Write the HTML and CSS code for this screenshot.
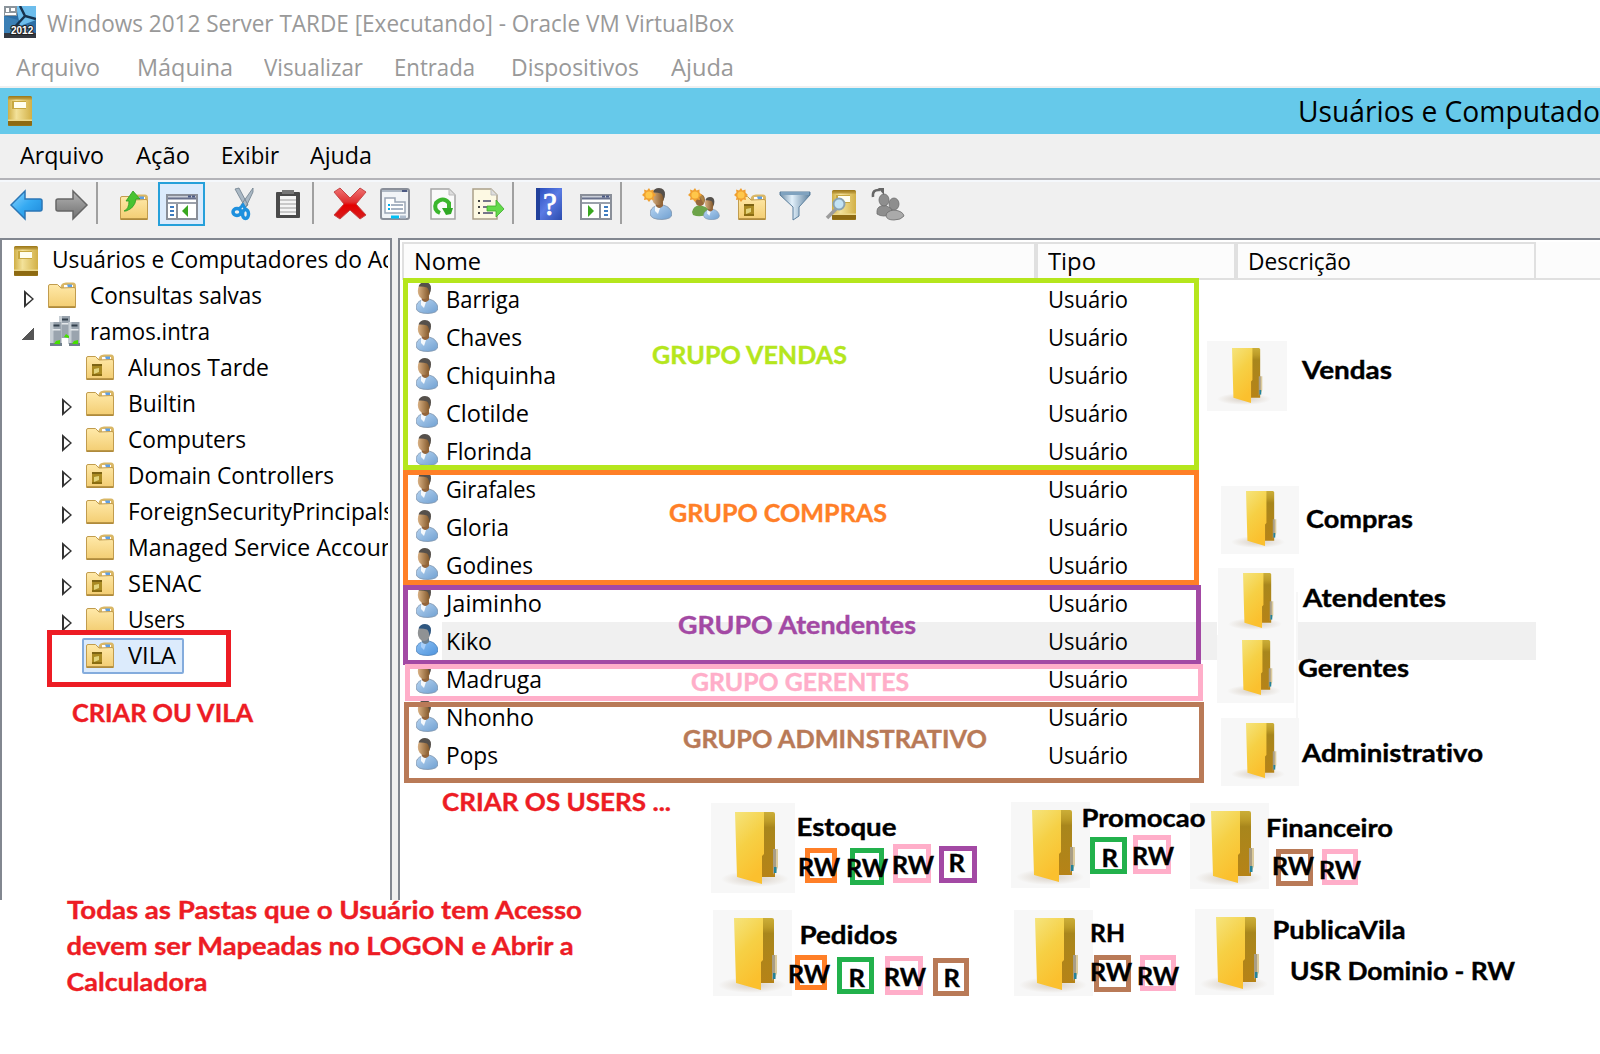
FILE: index.html
```html
<!DOCTYPE html>
<html lang="pt-BR">
<head>
<meta charset="utf-8">
<title>Windows 2012 Server TARDE [Executando] - Oracle VM VirtualBox</title>
<link rel="stylesheet" href="styles.css">
</head>
<body>
<svg class="defs" width="0" height="0">
  <defs>
    <linearGradient id="gFolder" x1="0" y1="0" x2="0" y2="1"><stop offset="0" stop-color="#ffe9a9"/><stop offset="1" stop-color="#f3cd72"/></linearGradient>
    <linearGradient id="gFront" x1="0" y1="0" x2=".4" y2="1"><stop offset="0" stop-color="#f5e47c"/><stop offset=".5" stop-color="#f6d045"/><stop offset="1" stop-color="#fbc02e"/></linearGradient>
    <linearGradient id="gBack" x1="0" y1="0" x2="0" y2="1"><stop offset="0" stop-color="#cbae38"/><stop offset=".14" stop-color="#bd9c28"/><stop offset=".24" stop-color="#a8861c"/><stop offset="1" stop-color="#b68317"/></linearGradient>
    <linearGradient id="gBook" x1="0" y1="0" x2="1" y2="0"><stop offset="0" stop-color="#cfae45"/><stop offset=".35" stop-color="#f3e29a"/><stop offset="1" stop-color="#d2b046"/></linearGradient>
    <linearGradient id="gBlue" x1="0" y1="0" x2="1" y2="1"><stop offset="0" stop-color="#8fd6ff"/><stop offset=".5" stop-color="#35aaf2"/><stop offset="1" stop-color="#1c86d8"/></linearGradient>
    <linearGradient id="gGray" x1="0" y1="0" x2="0" y2="1"><stop offset="0" stop-color="#b5b5b5"/><stop offset="1" stop-color="#707070"/></linearGradient>
    <linearGradient id="gRed" x1="0" y1="0" x2="0" y2="1"><stop offset="0" stop-color="#ef7373"/><stop offset=".45" stop-color="#e03030"/><stop offset=".55" stop-color="#e40000"/><stop offset="1" stop-color="#d62020"/></linearGradient>
    <linearGradient id="gSkin" x1="0" y1="0" x2="1" y2="0"><stop offset="0" stop-color="#d9b184"/><stop offset="1" stop-color="#7d5224"/></linearGradient>
    <linearGradient id="gShirt" x1="0" y1="0" x2="1" y2="1"><stop offset="0" stop-color="#b9d6f3"/><stop offset="1" stop-color="#6f9fd0"/></linearGradient>
    <linearGradient id="gSel" x1="0" y1="0" x2="1" y2="1"><stop offset="0" stop-color="#8fc2f5"/><stop offset="1" stop-color="#4d93dc"/></linearGradient>
    <linearGradient id="gFunnel" x1="0" y1="0" x2="1" y2="0"><stop offset="0" stop-color="#6d8ca6"/><stop offset=".4" stop-color="#e3f1fb"/><stop offset="1" stop-color="#5b7f9d"/></linearGradient>
    <linearGradient id="gHelp" x1="0" y1="0" x2="1" y2="1"><stop offset="0" stop-color="#2348b8"/><stop offset=".5" stop-color="#5a7be4"/><stop offset="1" stop-color="#2c4cae"/></linearGradient>
    <radialGradient id="gShadow"><stop offset="0" stop-color="#d8cfc4"/><stop offset="1" stop-color="#f7f7f7"/></radialGradient>

    <symbol id="vm" viewBox="0 0 32 32"><path d="M0 0h32v32H0z" fill="#2c6ea5"/><path d="M12 0h20v14L16 20z" fill="#6dbdec"/><path d="M0 10l14 4 6 18H0z" fill="#3b7fb5"/><path d="M16 0l5 10 11 3M21 10L8 24" stroke="#17324e" stroke-width="2.500" fill="none"/><path d="M0 0h13v10H0z" fill="#8b949b"/><path d="M2 2h3v4H2zM7 2h4v3H7zM1 7h11v2H1z" fill="#fff"/><path d="M0 27h32v5H0z" fill="#333942"/><text x="7" y="28" font-family="Liberation Sans" font-size="10" font-weight="bold" fill="#fff" stroke="#222" stroke-width="2" paint-order="stroke">2012</text></symbol>

    <symbol id="book" viewBox="0 0 24 30"><rect width="24" height="30" rx="1.5" fill="#a07c1d"/><path d="M0 2h24v22H0z" fill="url(#gBook)"/><path d="M0 1.5h24v2H0z" fill="#b8973a"/><path d="M0 25h24v4.500H0z" fill="#8d6a12"/><path d="M0 23.500h24v1.500H0z" fill="#ecd88b"/><rect x="4" y="5" width="14" height="8" fill="#c7a840"/><rect x="6" y="6" width="12" height="6" fill="#fffff0"/></symbol>

    <symbol id="folder" viewBox="0 0 28 26"><path d="M12 7c1-6 3-6 6-6.500h7c2 0 3 1.500 3 3.500v6H12z" fill="#d9b766"/><path d="M16 3h9v3h-9z" fill="#fff"/><path d="M19 2.500h5v3h-4z" fill="#5f9fe4"/><path d="M.5 4q0-1.500 1.500-1.500h7.500L13 6l13-.5q1.500 0 1.500 1.500v18.500H.5z" fill="url(#gFolder)" stroke="#c19c4e"/><path d="M1 25h26" stroke="#a98537" stroke-width="1.500"/></symbol>
    <symbol id="ou" viewBox="0 0 28 26"><use href="#folder"/><rect x="6" y="10" width="10" height="12" fill="#a98a22"/><rect x="6" y="10" width="10" height="2" fill="#7d6414"/><path d="M8 15l5-1v4l-5 2z" fill="#e2d37a"/><path d="M6 20h10v2H6z" fill="#8a6d12"/></symbol>

    <symbol id="server" viewBox="0 0 30 30"><g id="tower"><rect x="9" width="11" height="22" fill="#9aa4ae"/><path d="M9 0h3v22H9z" fill="#c7ced4"/><path d="M12 2.500h6v2h-6z" fill="#35424e"/><path d="M11 7h8v1.500h-8z" fill="#e4e8eb"/></g><use href="#tower" x="-8.500" y="6"/><use href="#tower" x="9.500" y="6"/><path d="M0 27h12v3H0zM19 27h11v3H19z" fill="#71808c"/><path d="M4 28l2-3 4-1v4zM22 28l2-3 4-1v4zM14 21l2-3 3 2v2z" fill="#45e000"/></symbol>

    <symbol id="user" viewBox="0 0 22 32"><path d="M0 26q0-6 6-8l7-1q8 2 9 9 0 5-10 5.500Q1 31.500 0 26z" fill="url(#gShirt)" stroke="#7d93ab" stroke-width=".8"/><path d="M5 18l5 2-2 6-3-3z" fill="#f4f8fc"/><path d="M5 12l8 2v4q-4 4-7 0z" fill="#94653a"/><ellipse cx="8" cy="9" rx="6.200" ry="8" fill="url(#gSkin)"/><path d="M2.500 4.500Q4 0 9 0q6 0 6 6.500 0 3-1.500 5.500Q13 7 11 5.500 7 4 2.500 4.500z" fill="#55504b"/></symbol>
    <symbol id="userSel" viewBox="0 0 22 32"><path d="M0 26q0-6 6-8l7-1q8 2 9 9 0 5-10 5.500Q1 31.500 0 26z" fill="url(#gSel)" stroke="#4a7fb8" stroke-width=".8"/><path d="M5 18l5 2-2 6-3-3z" fill="#a9d0fa"/><path d="M5 12l8 2v4q-4 4-7 0z" fill="#6d8090"/><ellipse cx="8" cy="9" rx="6.200" ry="8" fill="#8f9294"/><path d="M2.500 4.500Q4 0 9 0q6 0 6 6.500 0 3-1.500 5.500Q13 7 11 5.500 7 4 2.500 4.500z" fill="#2f5780"/></symbol>
    <symbol id="spark" viewBox="0 0 14 14"><path d="M7 0l1.500 2.500L11.500 1.500v3L14 7l-2.500 2 .5 3-3-.5L7 14l-2-2.500-3 .5.500-3L0 7l2.500-2.500L2 1.500l3 1z" fill="#f0a030"/><circle cx="7" cy="7" r="3.600" fill="#ffc74a"/></symbol>

    <symbol id="open" viewBox="0 0 44 72"><path d="M27 0h11q2 0 2 2v63H27z" fill="url(#gBack)"/><path d="M38 37h3v20l-3 6z" fill="#a99e86"/><path d="M41 37h2v18l-2 5z" fill="#dccb9c"/><path d="M39 55h2.500v6H39z" fill="#24839a"/><path d="M0 0h29v42l-2 2v28L2 65z" fill="url(#gFront)"/></symbol>
  </defs>
</svg>

<header class="vm-title"><svg class="vm-icon"><use href="#vm"/></svg><span data-fit="687">Windows 2012 Server TARDE [Executando] - Oracle VM VirtualBox</span></header>
<nav class="vm-menu"><span data-fit="84">Arquivo</span><span data-fit="96">Máquina</span><span data-fit="99">Visualizar</span><span data-fit="81">Entrada</span><span data-fit="128">Dispositivos</span><span data-fit="63">Ajuda</span></nav>

<div class="mmc-title"><svg class="mmc-icon"><use href="#book"/></svg><span data-fit="302">Usuários e Computado</span></div>
<nav class="mmc-menu"><span data-fit="84">Arquivo</span><span data-fit="54">Ação</span><span data-fit="58">Exibir</span><span data-fit="62">Ajuda</span></nav>

<div class="toolbar">
  <svg viewBox="0 180 940 58" width="940" height="58">
    <path d="M11 205l14-14v8h15q2 0 2 2v8q0 2-2 2H25v8z" fill="url(#gBlue)" stroke="#2b76b5" stroke-width="1.500"/>
    <path d="M87 205l-14-14v8H58q-2 0-2 2v8q0 2 2 2h15v8z" fill="url(#gGray)" stroke="#666" stroke-width="1.500"/>
    <path d="M97 182v42M313 182v42M513 182v42M621 182v42" stroke="#a0a0a0" stroke-width="2"/>
    <use href="#folder" x="120" y="194" width="28" height="26"/>
    <path d="M124 211q5-2 5-10h-3l7-10 7 8h-4q-1 9-10 12z" fill="#49c331" stroke="#2d9a22" stroke-width=".8"/>
    <rect x="159" y="183" width="45" height="42" fill="#dcebfc" stroke="#26a0da" stroke-width="2"/>
    <g id="console"><rect x="167" y="195" width="30" height="24" fill="#fff" stroke="#8a8f99" stroke-width="2"/><path d="M168 196h28v3h-28z" fill="#c9ced8"/><path d="M168 198.500h28" stroke="#68718c" stroke-width="2"/><path d="M188 196.500h3m1 0h3" stroke="#4c5a84" stroke-width="2"/><path d="M168 203h28" stroke="#9aa0ab" stroke-width="2"/></g>
    <path d="M177 204v14" stroke="#8a8f99" stroke-width="2"/><path d="M170 207h4m-4 4h4m-4 4h4" stroke="#3f7cc0" stroke-width="2"/><path d="M188 205v12l-6-6z" fill="#39a71f"/>
    <path d="M235 189l10 18 3-2-9-17zM253 188l-12 17 4 4 8-17z" fill="#aab8c4" stroke="#6d7e8c" stroke-width=".8"/>
    <ellipse cx="237" cy="212" rx="4" ry="3.500" fill="none" stroke="#1e90de" stroke-width="3.500"/><ellipse cx="245.500" cy="214" rx="3" ry="4.500" fill="none" stroke="#1e90de" stroke-width="3.500"/><path d="M239 209l4-4 3 5" fill="none" stroke="#1e90de" stroke-width="3"/>
    <rect x="276" y="192" width="24" height="26" rx="1" fill="#4a4a4a"/><path d="M280 196h16v19h-16z" fill="#f5f5f5"/><path d="M282 190h12v4h-12z" fill="#777"/><path d="M280 200h16m-16 4h16m-16 4h16m-16 4h16" stroke="#bbb" stroke-width="1.500"/>
    <path d="M334 192l6-4 10 10 10-10 6 4-10 12 10 11-6 4-10-9-10 9-6-4 10-11z" fill="url(#gRed)" stroke="#c64545"/>
    <rect x="381" y="189" width="28" height="30" rx="2" fill="#f1f4f7" stroke="#8a8f99" stroke-width="2"/><path d="M382 191h26" stroke="#aeb8c4" stroke-width="2"/><path d="M402 191h5" stroke="#4c5a84" stroke-width="2"/><path d="M385 198h10v4h10v11h-20z" fill="#fff" stroke="#9aa5b5" stroke-width="1.500"/><path d="M391 205h12m-12 4h12" stroke="#8b9bb0" stroke-width="1.500"/><path d="M388 205h2m-2 4h2" stroke="#00aeef" stroke-width="2"/><path d="M391 217h8" stroke="#00c0f5" stroke-width="3"/><path d="M400 217h6" stroke="#aebccd" stroke-width="3"/>
    <path d="M431 189h18l6 6v24h-24z" fill="#fafafa" stroke="#a5a5a5" stroke-width="1.500"/><path d="M449 189v6h6" fill="#ddd" stroke="#bbb"/><path d="M440 213q-7-3-4-10 7-7 13 0v6" fill="none" stroke="#3bb62d" stroke-width="4"/><path d="M442 208h11l-2 6-5 1z" fill="#2fa825"/>
    <path d="M473 189h18l6 6v24h-24z" fill="#fdf9e3" stroke="#aaa089" stroke-width="1.500"/><path d="M491 189v6h6" fill="#ddd" stroke="#bbb"/><path d="M483 201h8m-8 6h8m-8 6h10" stroke="#77758a" stroke-width="2"/><path d="M478 201h2m-2 6h2m-2 6h2" stroke="#444" stroke-width="2"/><path d="M487 206h9v-6l8 9-8 8v-6h-9z" fill="#63da4a" stroke="#3caa2a" stroke-width=".8"/>
    <rect x="536" y="188" width="26" height="32" fill="url(#gHelp)"/><path d="M536 188h4v32h-4z" fill="#21409b"/><text x="543" y="215" font-family="Liberation Serif" font-size="31" fill="#fff" stroke="#fff" stroke-width=".8">?</text>
    <use href="#console" x="414"/><path d="M600 204v14" stroke="#8a8f99" stroke-width="2"/><path d="M604 207h4m-4 4h4m-4 4h4" stroke="#3f7cc0" stroke-width="2"/><path d="M588 205v12l6-6z" fill="#39a71f"/>
    <use href="#user" x="650" y="188" width="22" height="32"/><use href="#spark" x="642" y="188" width="14" height="14"/>
    <g><path d="M692 212q1-6 8-7l8 3v6q-8 4-15 1z" fill="#6da449"/><ellipse cx="700" cy="200" rx="5" ry="6" fill="#96683c"/><path d="M698 194q7-1 6 10z" fill="#ad8544"/><use href="#user" x="703" y="197" width="17" height="23"/></g><use href="#spark" x="688" y="188" width="14" height="14"/>
    <use href="#ou" x="738" y="194" width="28" height="26"/><use href="#spark" x="734" y="188" width="14" height="14"/>
    <path d="M780 192h30v3l-11 12v9l-6 4v-13l-13-12z" fill="url(#gFunnel)" stroke="#5b7f9d"/><path d="M781 193.500h28" stroke="#7fa2bf" stroke-width="3"/>
    <use href="#book" x="832" y="190" width="24" height="30"/><path d="M836 209l-9 9" stroke="#9c9c9c" stroke-width="3.500"/><circle cx="839" cy="204" r="5.500" fill="#c3e3f5" stroke="#8aa2b0" stroke-width="2"/>
    <g fill="#8e8e8e" stroke="#6c6c6c" stroke-width=".8"><path d="M877 211q0-5 8-6l7 4v5q-9 4-15 0z"/><ellipse cx="884" cy="200" rx="5" ry="6"/><path d="M886 216q0-5 8-6 9 1 10 6-3 4-10 4t-8-4z" fill="#aaa"/><ellipse cx="894" cy="204" rx="5" ry="6"/></g><path d="M873 197q-1-8 7-7" fill="none" stroke="#666" stroke-width="2.500"/><path d="M878 188h6v7z" fill="#666"/>
  </svg>
</div>

<main class="panes">
  <section class="tree">
    <div class="node root"><svg class="i-book"><use href="#book"/></svg><span data-fit="341">Usuários e Computadores do Ac</span></div>
    <div class="node l1"><i class="closed"></i><svg class="i-folder"><use href="#folder"/></svg><span data-fit="172">Consultas salvas</span></div>
    <div class="node l1"><i class="opened"></i><svg class="i-server"><use href="#server"/></svg><span data-fit="120">ramos.intra</span></div>
    <div class="node l2"><i></i><svg class="i-folder"><use href="#ou"/></svg><span data-fit="141">Alunos Tarde</span></div>
    <div class="node l2"><i class="closed"></i><svg class="i-folder"><use href="#folder"/></svg><span data-fit="68">Builtin</span></div>
    <div class="node l2"><i class="closed"></i><svg class="i-folder"><use href="#folder"/></svg><span data-fit="118">Computers</span></div>
    <div class="node l2"><i class="closed"></i><svg class="i-folder"><use href="#ou"/></svg><span data-fit="206">Domain Controllers</span></div>
    <div class="node l2"><i class="closed"></i><svg class="i-folder"><use href="#folder"/></svg><span data-fit="266">ForeignSecurityPrincipals</span></div>
    <div class="node l2"><i class="closed"></i><svg class="i-folder"><use href="#folder"/></svg><span data-fit="267">Managed Service Accoun</span></div>
    <div class="node l2"><i class="closed"></i><svg class="i-folder"><use href="#ou"/></svg><span data-fit="74">SENAC</span></div>
    <div class="node l2"><i class="closed"></i><svg class="i-folder"><use href="#folder"/></svg><span data-fit="57">Users</span></div>
    <div class="node l2 selected"><i></i><svg class="i-folder"><use href="#ou"/></svg><span data-fit="48">VILA</span></div>
  </section>
  <section class="list">
    <div class="head"><div><span data-fit="67">Nome</span></div><div><span data-fit="48">Tipo</span></div><div><span data-fit="103">Descrição</span></div><div></div></div>
    <div class="row"><svg><use href="#user"/></svg><b><span data-fit="74">Barriga</span></b><b><span data-fit="80">Usuário</span></b></div>
    <div class="row"><svg><use href="#user"/></svg><b><span data-fit="76">Chaves</span></b><b><span data-fit="80">Usuário</span></b></div>
    <div class="row"><svg><use href="#user"/></svg><b><span data-fit="110">Chiquinha</span></b><b><span data-fit="80">Usuário</span></b></div>
    <div class="row"><svg><use href="#user"/></svg><b><span data-fit="83">Clotilde</span></b><b><span data-fit="80">Usuário</span></b></div>
    <div class="row"><svg><use href="#user"/></svg><b><span data-fit="86">Florinda</span></b><b><span data-fit="80">Usuário</span></b></div>
    <div class="row"><svg><use href="#user"/></svg><b><span data-fit="90">Girafales</span></b><b><span data-fit="80">Usuário</span></b></div>
    <div class="row"><svg><use href="#user"/></svg><b><span data-fit="63">Gloria</span></b><b><span data-fit="80">Usuário</span></b></div>
    <div class="row"><svg><use href="#user"/></svg><b><span data-fit="87">Godines</span></b><b><span data-fit="80">Usuário</span></b></div>
    <div class="row"><svg><use href="#user"/></svg><b><span data-fit="96">Jaiminho</span></b><b><span data-fit="80">Usuário</span></b></div>
    <div class="row current"><svg><use href="#userSel"/></svg><b><span data-fit="46">Kiko</span></b><b><span data-fit="80">Usuário</span></b></div>
    <div class="row"><svg><use href="#user"/></svg><b><span data-fit="96">Madruga</span></b><b><span data-fit="80">Usuário</span></b></div>
    <div class="row"><svg><use href="#user"/></svg><b><span data-fit="88">Nhonho</span></b><b><span data-fit="80">Usuário</span></b></div>
    <div class="row"><svg><use href="#user"/></svg><b><span data-fit="52">Pops</span></b><b><span data-fit="80">Usuário</span></b></div>
  </section>
</main>

<svg class="notes" viewBox="0 0 1600 1054" width="1600" height="1054">
  <g class="tiles">
    <path class="gap" d="M1217 622h81v38h-81z"/>
    <path d="M1207 341h80v70h-80zM1221 486h78v68h-78zM1218 568h76v68h-76zM1217 635h77v68h-77zM1221 718h78v68h-78zM1296 592h2v126h-2z"/>
    <path d="M711 803h84v90h-84zM1011 802h79v86h-79zM1190 803h79v86h-79zM713 910h79v86h-79zM1014 910h79v86h-79zM1195 909h79v86h-79z"/>
  </g>
  <g fill="url(#gShadow)">
    <ellipse cx="1244" cy="399" rx="27" ry="6"/><ellipse cx="1258" cy="542" rx="27" ry="6"/><ellipse cx="1255" cy="624" rx="27" ry="6"/><ellipse cx="1254" cy="691" rx="27" ry="6"/><ellipse cx="1258" cy="774" rx="27" ry="6"/>
    <ellipse cx="755" cy="879" rx="34" ry="8"/><ellipse cx="1050" cy="877" rx="34" ry="8"/><ellipse cx="1229" cy="878" rx="34" ry="8"/><ellipse cx="752" cy="985" rx="34" ry="8"/><ellipse cx="1053" cy="985" rx="34" ry="8"/><ellipse cx="1234" cy="984" rx="34" ry="8"/>
  </g>
  <g class="small-folders">
    <svg x="1232" y="348" width="31" height="55" viewBox="0 0 44 72" preserveAspectRatio="none"><use href="#open" width="44" height="72"/></svg>
    <svg x="1246" y="491" width="31" height="55" viewBox="0 0 44 72" preserveAspectRatio="none"><use href="#open" width="44" height="72"/></svg>
    <svg x="1243" y="573" width="31" height="55" viewBox="0 0 44 72" preserveAspectRatio="none"><use href="#open" width="44" height="72"/></svg>
    <svg x="1242" y="640" width="31" height="55" viewBox="0 0 44 72" preserveAspectRatio="none"><use href="#open" width="44" height="72"/></svg>
    <svg x="1246" y="723" width="31" height="55" viewBox="0 0 44 72" preserveAspectRatio="none"><use href="#open" width="44" height="72"/></svg>
  </g>
  <use href="#open" x="735" y="812" width="44" height="72"/>
  <use href="#open" x="1032" y="810" width="44" height="72"/>
  <use href="#open" x="1211" y="811" width="44" height="72"/>
  <use href="#open" x="734" y="918" width="44" height="72"/>
  <use href="#open" x="1035" y="918" width="44" height="72"/>
  <use href="#open" x="1216" y="917" width="44" height="72"/>

  <g class="frames">
    <rect class="lime" x="405.500" y="280.500" width="791" height="187"/>
    <rect class="orange" x="405.500" y="472.500" width="791" height="110"/>
    <rect class="purple" x="405.500" y="587.500" width="793" height="75"/>
    <rect class="pink" x="407.500" y="666.500" width="793" height="32"/>
    <rect class="brown" x="406.500" y="704.500" width="795" height="76"/>
    <rect class="red" x="49.500" y="632.500" width="179" height="52"/>
    <rect class="orange" x="807.500" y="850.500" width="27" height="30"/>
    <rect class="green" x="852.500" y="850.500" width="29" height="32"/>
    <rect class="pink" x="895.500" y="846.500" width="33" height="34"/>
    <rect class="purple" x="941.500" y="848.500" width="33" height="32"/>
    <rect class="green" x="1092.500" y="839.500" width="32" height="32"/>
    <rect class="pink" x="1135.500" y="837.500" width="33" height="34"/>
    <rect class="brown" x="1278.500" y="851.500" width="32" height="32"/>
    <rect class="pink" x="1324.500" y="851.500" width="31" height="31"/>
    <rect class="orange" x="797.500" y="957.500" width="27" height="30"/>
    <rect class="green" x="839.500" y="959.500" width="32" height="32"/>
    <rect class="pink" x="887.500" y="958.500" width="33" height="34"/>
    <rect class="brown" x="935.500" y="960.500" width="31" height="33"/>
    <rect class="brown" x="1096.500" y="957.500" width="32" height="32"/>
    <rect class="pink" x="1142.500" y="957.500" width="31" height="31"/>
  </g>
  <g class="labels">
    <text class="lime" x="652" y="364" textLength="195" lengthAdjust="spacingAndGlyphs">GRUPO VENDAS</text>
    <text class="orange" x="669" y="522" textLength="218" lengthAdjust="spacingAndGlyphs">GRUPO COMPRAS</text>
    <text class="purple" x="678" y="634" textLength="238" lengthAdjust="spacingAndGlyphs">GRUPO Atendentes</text>
    <text class="pink" x="691" y="691" textLength="218" lengthAdjust="spacingAndGlyphs">GRUPO GERENTES</text>
    <text class="brown" x="683" y="748" textLength="304" lengthAdjust="spacingAndGlyphs">GRUPO ADMINSTRATIVO</text>
    <text class="red" x="72" y="722" textLength="181" lengthAdjust="spacingAndGlyphs">CRIAR OU VILA</text>
    <text class="red" x="442" y="811" textLength="229" lengthAdjust="spacingAndGlyphs">CRIAR OS USERS ...</text>
    <text class="red" x="67" y="919" textLength="515" lengthAdjust="spacingAndGlyphs">Todas as Pastas que o Usuário tem Acesso</text>
    <text class="red" x="66.500" y="955" textLength="507" lengthAdjust="spacingAndGlyphs">devem ser Mapeadas no LOGON e Abrir a</text>
    <text class="red" x="66.500" y="991" textLength="141" lengthAdjust="spacingAndGlyphs">Calculadora</text>
    <text x="1302" y="379" textLength="90" lengthAdjust="spacingAndGlyphs">Vendas</text>
    <text x="1306" y="528" textLength="107" lengthAdjust="spacingAndGlyphs">Compras</text>
    <text x="1303" y="607" textLength="143" lengthAdjust="spacingAndGlyphs">Atendentes</text>
    <text x="1298" y="677" textLength="111" lengthAdjust="spacingAndGlyphs">Gerentes</text>
    <text x="1302" y="762" textLength="181" lengthAdjust="spacingAndGlyphs">Administrativo</text>
    <text x="796.500" y="836" textLength="100" lengthAdjust="spacingAndGlyphs">Estoque</text>
    <text x="1081.500" y="827" textLength="124" lengthAdjust="spacingAndGlyphs">Promocao</text>
    <text x="1266" y="837" textLength="127" lengthAdjust="spacingAndGlyphs">Financeiro</text>
    <text x="799.500" y="944" textLength="98" lengthAdjust="spacingAndGlyphs">Pedidos</text>
    <text x="1090" y="942" textLength="35" lengthAdjust="spacingAndGlyphs">RH</text>
    <text x="1272.500" y="939" textLength="133" lengthAdjust="spacingAndGlyphs">PublicaVila</text>
    <text x="1290" y="980" textLength="225" lengthAdjust="spacingAndGlyphs">USR Dominio - RW</text>
    <text x="798" y="876" textLength="42" lengthAdjust="spacingAndGlyphs">RW</text>
    <text x="846" y="877" textLength="42" lengthAdjust="spacingAndGlyphs">RW</text>
    <text x="892" y="874" textLength="42" lengthAdjust="spacingAndGlyphs">RW</text>
    <text x="948.500" y="872">R</text>
    <text x="1101.500" y="867">R</text>
    <text x="1132" y="865" textLength="42" lengthAdjust="spacingAndGlyphs">RW</text>
    <text x="1272" y="875" textLength="42" lengthAdjust="spacingAndGlyphs">RW</text>
    <text x="1319" y="879" textLength="42" lengthAdjust="spacingAndGlyphs">RW</text>
    <text x="788" y="983" textLength="42" lengthAdjust="spacingAndGlyphs">RW</text>
    <text x="848.500" y="987">R</text>
    <text x="884" y="986" textLength="42" lengthAdjust="spacingAndGlyphs">RW</text>
    <text x="943.500" y="987">R</text>
    <text x="1090" y="981" textLength="42" lengthAdjust="spacingAndGlyphs">RW</text>
    <text x="1137" y="985" textLength="42" lengthAdjust="spacingAndGlyphs">RW</text>
  </g>
</svg>
<script src="fit.js"></script>
</body>
</html>
```

FILE: styles.css
```css
*, *::before, *::after { box-sizing: border-box; }
body { margin: 0; width: 1600px; height: 1054px; overflow: hidden; position: relative; background: #fff; color: #000; font: 24px "Open Sans", "Noto Sans", sans-serif; }
svg { display: block; flex: none; }
.defs { position: absolute; }
[data-fit] { display: inline-block; white-space: nowrap; transform-origin: 0 50%; }

.vm-title { height: 45px; padding: 0 0 0 4px; display: flex; gap: 11px; line-height: 45px; color: #999; }
.vm-icon { width: 32px; height: 32px; margin-top: 6px; }
.vm-menu { height: 43px; display: grid; grid-template-columns: 121px 127px 130px 117px 160px 1fr; padding: 1px 0 0 16px; line-height: 42px; color: #999; border-bottom: 2px solid #f0f0f0; }

.mmc-title { height: 46px; display: flex; justify-content: space-between; padding-left: 8px; background: #66c9ea; font-size: 30px; line-height: 45px; }
.mmc-icon { width: 24px; height: 30px; margin-top: 8px; }
.mmc-menu { height: 46px; display: grid; grid-template-columns: 116px 85px 89px 1fr; padding-left: 20px; background: #f0f0f0; line-height: 42px; border-bottom: 2px solid #b3b3b8; }
.toolbar { height: 58px; background: #f0f0f0; border-top: 2px solid #f5f8fc; }
.toolbar svg { margin-top: -2px; }

.panes { display: grid; grid-template-columns: 392px 1fr; gap: 6px; height: 662px; background: #f0f0f0; }
.tree, .list { background: #fff; border: 2px solid #828790; border-bottom: 0; overflow: hidden; }
.tree { padding-top: 2px; }
.node { display: flex; height: 36px; margin-right: 2px; line-height: 33px; white-space: nowrap; overflow: hidden; }
.root { padding-left: 12px; gap: 14px; }
.l1 { padding-left: 20px; }
.l2 { padding-left: 58px; }
.i-book { width: 24px; height: 30px; margin-top: 4px; }
.i-folder { width: 28px; height: 26px; margin: 4px 14px 0 0; }
.i-server { width: 30px; height: 30px; margin: 2px 10px 0 2px; }
.node i { flex: none; width: 26px; height: 36px; }
.closed { position: relative; }
.closed::before, .closed::after { content: ""; position: absolute; left: 2px; top: 12px; width: 10px; height: 18px; background: #333; clip-path: polygon(0 0, 100% 50%, 0 100%); }
.closed::after { left: 4px; top: 16px; width: 6px; height: 10px; background: #fff; }
.opened { background: linear-gradient(135deg, transparent 50%, #555 50%) 0 14px / 12px 12px no-repeat; }
.selected { position: relative; z-index: 0; }
.selected::before { content: ""; position: absolute; z-index: -1; left: 80px; top: 0; width: 102px; height: 36px; border: 2px solid #84acdd; border-radius: 2px; background: #dcebfc; }

.list { border-right: 0; padding: 2px 0 0 2px; }
.head { display: grid; grid-template-columns: 634px 200px 298px 1fr; height: 38px; line-height: 34px; background: #fcfcfc; border-bottom: 2px solid #e0e0e0; }
.head div { border-top: 2px solid #e0e0e0; border-right: 2px solid #e0e0e0; border-left: 2px solid #e0e0e0; padding-left: 10px; }
.head div:nth-child(3) { border-right: 0; }
.head div:last-child { border-top: 0; border-right: 0; }
.row { display: grid; grid-template-columns: 22px 604px 1fr; height: 38px; margin-right: 64px; padding-left: 14px; line-height: 37px; }
.row svg { width: 22px; height: 32px; margin-top: 2px; }
.row b { font-weight: 400; padding-left: 8px; }
.row b:last-child { padding-left: 6px; }
.current { background: linear-gradient(#f0f0f0, #f0f0f0) 40px 0 no-repeat; }

.notes { position: absolute; left: 0; top: 0; }
.tiles { fill: #f7f7f7; }
.tiles .gap { fill: #fff; }
.frames { fill: none; stroke-width: 5px; }
.frames .lime { stroke: #b5e61d; } .frames .orange { stroke: #ff7f27; } .frames .purple { stroke: #a349a4; }
.frames .pink { stroke: #ffaec9; } .frames .brown { stroke: #b97a57; } .frames .red { stroke: #ed1c24; } .frames .green { stroke: #22b14c; }
.labels { font: 700 25.5px Lato, "Open Sans", sans-serif; font-variant-ligatures: none; fill: #000; stroke: #000; stroke-width: .4px; }
.labels .lime { fill: #b5e61d; stroke: #b5e61d; } .labels .orange { fill: #ff7f27; stroke: #ff7f27; } .labels .purple { fill: #a349a4; stroke: #a349a4; }
.labels .pink { fill: #ffaec9; stroke: #ffaec9; } .labels .brown { fill: #b97a57; stroke: #b97a57; } .labels .red { fill: #ed1c24; stroke: #ed1c24; }
```

FILE: fit.js
```js
// Condenses each label to the width given in its data-fit attribute.
document.querySelectorAll('[data-fit]').forEach(function (el) {
  var want = parseFloat(el.dataset.fit);
  var inner = document.createElement('span');
  inner.textContent = el.textContent;
  inner.style.display = 'inline-block';
  inner.style.transformOrigin = '0 50%';
  el.textContent = '';
  el.appendChild(inner);
  var natural = inner.getBoundingClientRect().width;
  el.style.flex = 'none';
  el.style.width = want + 'px';
  inner.style.transform = 'scaleX(' + want / natural + ')';
});
```
